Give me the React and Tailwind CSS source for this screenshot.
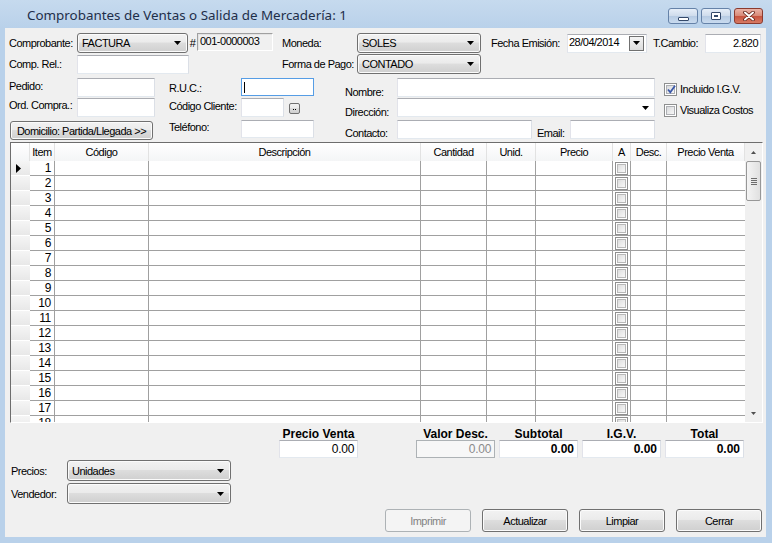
import React from "react";

const NARROW = "font-['Liberation_Sans',Arial,sans-serif] text-[11px] tracking-[-0.5px]";
const BOLD = "font-['Liberation_Sans',Arial,sans-serif] font-bold text-[12px] tracking-normal";
const btnBg =
  "bg-[linear-gradient(to_bottom,#f2f2f2_0%,#ebebeb_45%,#dddddd_50%,#cfcfcf_100%)]";

function Arrow({ color = "#000", w = 7, h = 4, up = false }) {
  return (
    <svg width={w} height={h} viewBox={`0 0 ${w} ${h}`} className="shrink-0">
      <path d={up ? `M0 ${h}H${w}L${w / 2} 0Z` : `M0 0H${w}L${w / 2} ${h}Z`} fill={color} />
    </svg>
  );
}

function Combo({ className = "", text = "" }) {
  return (
    <div
      className={`flex items-center rounded-[3px] border border-[#707070] ${btnBg} shadow-[inset_0_0_0_1px_#fbfbfb] pl-[4px] pr-[6px] ${className}`}
    >
      <span className="flex-1 whitespace-nowrap overflow-hidden">{text}</span>
      <Arrow />
    </div>
  );
}

function Tb({ className = "", children }) {
  return (
    <div
      className={`shrink-0 border border-[#abadb3] border-l-[#e2e3ea] border-r-[#dbdfe6] border-b-[#e3e9ef] bg-white ${className}`}
    >
      {children}
    </div>
  );
}

function CheckBox({ checked = false }) {
  return (
    <div className="relative w-[13px] h-[13px] shrink-0 border border-[#8e8f8f] bg-white p-[1px]">
      <div className="w-full h-full border border-[#aeb0b4] bg-[linear-gradient(135deg,#d9dadc,#f7f7f7)]" />
      {checked && (
        <svg className="absolute left-[1px] top-[0px]" width="11" height="11" viewBox="0 0 11 11">
          <path d="M2 5.5 L4.3 8.3 L9 1.8" fill="none" stroke="#3b58a8" strokeWidth="1.8" />
        </svg>
      )}
    </div>
  );
}

function GridCheck() {
  return (
    <div className="w-[13px] h-[13px] border border-[#8f8f8f] bg-white p-[1px]">
      <div className="w-full h-full border border-[#b9b9b9] bg-[linear-gradient(135deg,#dedede,#f8f8f8)]" />
    </div>
  );
}

const COLS = [
  { w: "w-[25px]", h: "Item" },
  { w: "w-[94px]", h: "Código" },
  { w: "w-[272px]", h: "Descripción" },
  { w: "w-[66px]", h: "Cantidad" },
  { w: "w-[49px]", h: "Unid." },
  { w: "w-[77px]", h: "Precio" },
  { w: "w-[18px]", h: "A" },
  { w: "w-[36px]", h: "Desc." },
  { w: "w-[78px]", h: "Precio Venta" },
];

function TitleButton({ className = "", children }) {
  return (
    <div className={`h-[16px] rounded-[3px] border flex items-center justify-center ${className}`}>
      {children}
    </div>
  );
}

export default function App() {
  return (
    <div className="w-[772px] h-[543px] bg-[#b9d1ea] flex flex-col overflow-hidden">
      {/* Title bar */}
      <div className="h-[28px] shrink-0 flex bg-[linear-gradient(to_bottom,#c6daee,#b9d1ea)]">
        <div className="pl-[27px] pt-[7px] font-['Noto_Sans','Open_Sans',sans-serif] text-[13.4px] leading-[17px] text-[#1e2e4a] whitespace-nowrap">
          Comprobantes de Ventas o Salida de Mercadería: 1
        </div>
        <div className="ml-auto mr-[9px] mt-[8px] flex gap-[3px]">
          <TitleButton className="w-[30px] border-[#6582a8] bg-[linear-gradient(to_bottom,#e6eef8,#cfdcec_48%,#b7cbe3_52%,#c9dbef)]">
            <div className="mt-[5px] w-[11px] h-[4px] rounded-[1px] border border-[#34496a] bg-white" />
          </TitleButton>
          <TitleButton className="w-[30px] border-[#6582a8] bg-[linear-gradient(to_bottom,#e6eef8,#cfdcec_48%,#b7cbe3_52%,#c9dbef)]">
            <div className="w-[10px] h-[8px] rounded-[1px] border border-[#34496a] bg-white flex items-center justify-center">
              <div className="w-[4px] h-[2px] bg-[#34496a]" />
            </div>
          </TitleButton>
          <TitleButton className="w-[29px] border-[#8b3a2e] bg-[linear-gradient(to_bottom,#eab3a7,#d88a78_48%,#c7533f_52%,#d77a63)]">
            <svg width="12" height="10" viewBox="0 0 12 10">
              <path d="M2 1.5 L10 8.5 M10 1.5 L2 8.5" stroke="#5b1e14" strokeWidth="3.6" strokeLinecap="round" />
              <path d="M2 1.5 L10 8.5 M10 1.5 L2 8.5" stroke="#ffffff" strokeWidth="2" strokeLinecap="round" />
            </svg>
          </TitleButton>
        </div>
      </div>

      {/* Client area */}
      <div
        className={`ml-[5px] mr-[6px] mb-[6px] flex-1 bg-[#f0f0f0] flex flex-col ${NARROW} leading-[14px] text-black whitespace-nowrap`}
      >
        {/* Row 1 */}
        <div className="mt-[5px] h-[20px] flex items-center">
          <span className="ml-[4px] w-[68px] shrink-0">Comprobante:</span>
          <Combo className="w-[111px] h-[20px] shrink-0" text="FACTURA" />
          <span className="w-[9px] shrink-0 text-center">#</span>
          <div className="self-start w-[76px] h-[18px] shrink-0 border border-t-[#a0a0a0] border-l-[#a0a0a0] border-r-[#ffffff] border-b-[#ffffff] bg-[#f0f0f0] shadow-[inset_1px_1px_0_#e3e3e3] pl-[2px] leading-[14px]">
            001-0000003
          </div>
          <span className="ml-[9px] w-[75px] shrink-0">Moneda:</span>
          <Combo className="w-[124px] h-[20px] shrink-0" text="SOLES" />
          <span className="ml-[10px] w-[76px] shrink-0">Fecha Emisión:</span>
          <Tb className="w-[80px] h-[19px] flex items-center pl-[1px] pr-[2px]">
            <span className="flex-1 leading-[14px] self-start">28/04/2014</span>
            <div className="w-[15px] h-[15px] border border-[#707070] bg-[linear-gradient(#f4f4f4,#dcdcdc)] flex items-center justify-center">
              <Arrow />
            </div>
          </Tb>
          <span className="ml-[6px] w-[52px] shrink-0">T.Cambio:</span>
          <Tb className="w-[56px] h-[19px] text-right pr-[2px] leading-[16px]">2.820</Tb>
        </div>

        {/* Row 2 */}
        <div className="mt-[1px] h-[20px] flex items-center">
          <span className="ml-[4px] w-[68px] shrink-0">Comp. Rel.:</span>
          <Tb className="w-[112px] h-[19px]" />
          <span className="ml-[93px] w-[75px] shrink-0">Forma de Pago:</span>
          <Combo className="w-[124px] h-[20px] shrink-0" text="CONTADO" />
        </div>

        {/* Row 3 */}
        <div className="mt-[4px] h-[19px] flex items-start">
          <span className="ml-[4px] w-[68px] shrink-0 pt-[1px]">Pedido:</span>
          <Tb className="w-[78px] h-[19px]" />
          <span className="ml-[14px] w-[72px] shrink-0 pt-[3px]">R.U.C.:</span>
          <div className="w-[73px] h-[18px] shrink-0 border border-[#569de5] bg-white pl-[2px] pt-[3px]">
            <div className="w-[1px] h-[11px] bg-black" />
          </div>
          <span className="ml-[31px] w-[52px] shrink-0 pt-[7px]">Nombre:</span>
          <Tb className="w-[258px] h-[19px]" />
          <div className="ml-[9px] mt-[4px] flex items-center gap-[3px]">
            <CheckBox checked />
            <span>Incluido I.G.V.</span>
          </div>
        </div>

        {/* Row 4 */}
        <div className="mt-[1px] h-[19px] flex items-start">
          <span className="ml-[4px] w-[68px] shrink-0">Ord. Compra.:</span>
          <Tb className="w-[78px] h-[19px]" />
          <span className="ml-[14px] w-[72px] shrink-0 pt-[1px]">Código Cliente:</span>
          <Tb className="w-[43px] h-[19px]" />
          <div className={`ml-[5px] mt-[5px] w-[11px] h-[11px] shrink-0 rounded-[2px] border border-[#707070] ${btnBg} flex items-end justify-center pb-[3px] gap-[1px]`}>
            <div className="w-[1px] h-[1px] bg-black" />
            <div className="w-[1px] h-[1px] bg-black" />
          </div>
          <span className="ml-[45px] w-[52px] shrink-0 pt-[7px]">Dirección:</span>
          <Tb className="w-[258px] h-[19px] flex items-center justify-end pr-[5px]">
            <Arrow />
          </Tb>
          <div className="ml-[9px] mt-[5px] flex items-center gap-[3px]">
            <CheckBox />
            <span>Visualiza Costos</span>
          </div>
        </div>

        {/* Row 5 */}
        <div className="mt-[3px] h-[20px] flex items-start">
          <div className={`ml-[5px] mt-[1px] w-[143px] h-[19px] shrink-0 rounded-[3px] border border-[#707070] ${btnBg} shadow-[inset_0_0_0_1px_#fbfbfb] flex items-center justify-center`}>
            Domicilio: Partida/Llegada &gt;&gt;
          </div>
          <span className="ml-[16px] w-[72px] shrink-0">Teléfono:</span>
          <Tb className="w-[73px] h-[18px]" />
          <span className="ml-[31px] w-[52px] shrink-0 pt-[6px]">Contacto:</span>
          <Tb className="w-[135px] h-[19px]" />
          <span className="ml-[5px] w-[33px] shrink-0 pt-[6px]">Email:</span>
          <Tb className="w-[85px] h-[19px]" />
        </div>

        {/* Grid */}
        <div className="mt-[2px] ml-[5px] w-[753px] h-[281px] shrink-0 border border-t-[#6d6d6d] border-l-[#6d6d6d] border-r-[#ffffff] border-b-[#ffffff] bg-white flex">
          <div className="w-[734px] flex flex-col">
            {/* Header */}
            <div className="h-[18px] shrink-0 flex bg-[linear-gradient(to_bottom,#ffffff,#f4f5f6)]">
              <div className="w-[19px] border-r border-[#e2e2e2]" />
              {COLS.map((c) => (
                <div
                  key={c.h}
                  className={`${c.w} shrink-0 border-r border-[#e2e2e2] flex items-center justify-center overflow-hidden`}
                >
                  {c.h}
                </div>
              ))}
            </div>
            {/* Body */}
            <div className="h-[261px] overflow-hidden flex flex-col">
              {Array.from({ length: 18 }, (_, i) => (
                <div key={i} className="h-[15px] shrink-0 flex">
                  <div className="w-[19px] shrink-0 border-b border-white bg-[linear-gradient(to_bottom,#f5f5f5,#e8e8e8)] flex items-center pl-[5px]">
                    {i === 0 && (
                      <svg width="5" height="9" viewBox="0 0 5 9">
                        <path d="M0 0L5 4.5L0 9Z" fill="#000" />
                      </svg>
                    )}
                  </div>
                  <div className="w-[25px] shrink-0 border-r border-b border-[#a0a0a0] text-right pr-[3px] leading-[14px] text-[12px] tracking-[-0.3px]">
                    {i + 1}
                  </div>
                  <div className="w-[94px] shrink-0 border-r border-b border-[#a0a0a0]" />
                  <div className="w-[272px] shrink-0 border-r border-b border-[#a0a0a0]" />
                  <div className="w-[66px] shrink-0 border-r border-b border-[#a0a0a0]" />
                  <div className="w-[49px] shrink-0 border-r border-b border-[#a0a0a0]" />
                  <div className="w-[77px] shrink-0 border-r border-b border-[#a0a0a0]" />
                  <div className="w-[18px] shrink-0 border-r border-b border-[#a0a0a0] flex items-center justify-center">
                    <GridCheck />
                  </div>
                  <div className="w-[36px] shrink-0 border-r border-b border-[#a0a0a0]" />
                  <div className="w-[78px] shrink-0 border-b border-[#a0a0a0]" />
                </div>
              ))}
            </div>
          </div>
          {/* Scrollbar */}
          <div className="w-[17px] shrink-0 bg-[#f0f0f0] flex flex-col items-center">
            <div className="h-[18px] flex items-center justify-center">
              <Arrow w={5} h={3} up color="#4f4f4f" />
            </div>
            <div className="w-[15px] h-[40px] rounded-[2px] border border-[#979797] bg-[linear-gradient(to_right,#f4f4f4,#e0e0e0)] flex flex-col items-center justify-center gap-[1px]">
              <div className="w-[6px] h-[1px] bg-[#6d6d6d]" />
              <div className="w-[6px] h-[1px] bg-[#6d6d6d]" />
              <div className="w-[6px] h-[1px] bg-[#6d6d6d]" />
              <div className="w-[6px] h-[1px] bg-[#6d6d6d]" />
            </div>
            <div className="mt-auto h-[17px] flex items-center justify-center">
              <Arrow w={5} h={3} color="#4f4f4f" />
            </div>
          </div>
        </div>

        {/* Totals */}
        <div className="mt-[5px] ml-[274px] flex">
          <div className="w-[79px] shrink-0 flex flex-col">
            <div className={`h-[12px] leading-[12px] text-center ${BOLD}`}>Precio Venta</div>
            <Tb className="h-[18px] text-right pr-[3px] leading-[16px] text-[12px] tracking-[-0.3px]">0.00</Tb>
          </div>
          <div className="ml-[58px] flex gap-[4px]">
            <div className="w-[79px] shrink-0 flex flex-col">
              <div className={`h-[12px] leading-[12px] text-center ${BOLD}`}>Valor Desc.</div>
              <div className="h-[18px] border border-[#adb2b5] bg-[#f7f7f7] text-right pr-[3px] leading-[16px] text-[#8a8a8a] text-[12px] tracking-[-0.3px]">
                0.00
              </div>
            </div>
            {["Subtotal", "I.G.V.", "Total"].map((t) => (
              <div key={t} className="w-[79px] shrink-0 flex flex-col">
                <div className={`h-[12px] leading-[12px] text-center ${BOLD}`}>{t}</div>
                <Tb className={`h-[18px] text-right pr-[3px] leading-[16px] ${BOLD}`}>0.00</Tb>
              </div>
            ))}
          </div>
        </div>

        {/* Precios / Vendedor */}
        <div className="mt-[2px] h-[21px] flex items-center">
          <span className="ml-[6px] w-[56px] shrink-0">Precios:</span>
          <Combo className="w-[164px] h-[21px] shrink-0" text="Unidades" />
        </div>
        <div className="mt-[2px] h-[21px] flex items-center">
          <span className="ml-[6px] w-[56px] shrink-0">Vendedor:</span>
          <Combo className="w-[164px] h-[21px] shrink-0" text="" />
        </div>

        {/* Buttons */}
        <div className="mt-[5px] ml-[380px] h-[23px] flex gap-[11px]">
          <div className="w-[86px] h-[23px] rounded-[3px] border border-[#adb2b5] bg-[#f4f4f4] flex items-center justify-center text-[#838383]">
            Imprimir
          </div>
          {["Actualizar", "Limpiar", "Cerrar"].map((t) => (
            <div
              key={t}
              className={`w-[86px] h-[23px] rounded-[3px] border border-[#707070] ${btnBg} shadow-[inset_0_0_0_1px_#fbfbfb] flex items-center justify-center`}
            >
              {t}
            </div>
          ))}
        </div>
      </div>
    </div>
  );
}
